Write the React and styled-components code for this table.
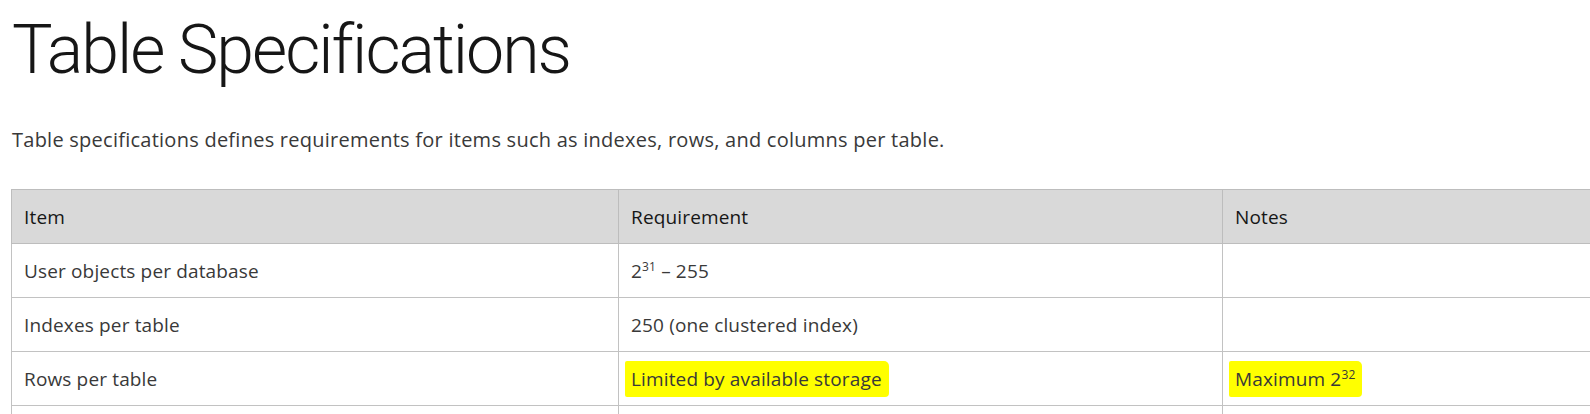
import styled, { createGlobalStyle } from 'styled-components'

const GlobalStyle = createGlobalStyle`
  html, body {
    margin: 0;
    padding: 0;
    background: #ffffff;
    overflow: hidden;
  }
`

const Page = styled.div`
  padding: 0 0 0 11px;
  font-family: "Open Sans", "Liberation Sans", sans-serif;
  width: 1900px;
`

const Title = styled.h1`
  margin: 0;
  padding: 10px 0 0 1px;
  font-family: Roboto, "Liberation Sans", sans-serif;
  font-weight: 300;
  font-size: 68px;
  line-height: 80px;
  letter-spacing: -2px;
  color: #161616;
`

const Intro = styled.p`
  margin: 38px 0 37px 1px;
  font-size: 20px;
  line-height: 24px;
  letter-spacing: 0.25px;
  color: #393939;
`

const Table = styled.table`
  border-collapse: collapse;
  table-layout: fixed;
  width: 1815px;
  font-size: 19px;
  letter-spacing: 0.15px;
`

const HeadCell = styled.th`
  width: ${p => p.$width}px;
  height: 54px;
  padding: 0 12px;
  box-sizing: border-box;
  background: #d9d9d9;
  border: 1px solid #bdbdbd;
  text-align: left;
  font-weight: 400;
  color: #161616;
`

const Cell = styled.td`
  height: 54px;
  padding: 0 12px;
  box-sizing: border-box;
  border: 1px solid #c2c2c2;
  color: #393939;
  vertical-align: middle;
`

const Mark = styled.span`
  background: #ffff00;
  padding: 5px 7px 5px 6px;
  margin-left: -6px;
  border-radius: 2px 5px 4px 2px;
`

const Sup = styled.sup`
  font-size: 12px;
  vertical-align: 7px;
  line-height: 0;
`

const rows = [
  { item: 'User objects per database', req: <>2<Sup>31</Sup> – 255</>, notes: '' },
  { item: 'Indexes per table', req: '250 (one clustered index)', notes: '' },
  {
    item: 'Rows per table',
    req: <Mark>Limited by available storage</Mark>,
    notes: <Mark>Maximum 2<Sup>32</Sup></Mark>,
  },
  { item: '', req: '', notes: '' },
]

export default function App() {
  return (
    <>
      <GlobalStyle />
      <Page>
        <Title>Table Specifications</Title>
        <Intro>
          Table specifications defines requirements for items such as indexes, rows, and columns per table.
        </Intro>
        <Table>
          <thead>
            <tr>
              <HeadCell $width={607}>Item</HeadCell>
              <HeadCell $width={604}>Requirement</HeadCell>
              <HeadCell $width={604}>Notes</HeadCell>
            </tr>
          </thead>
          <tbody>
            {rows.map((row, i) => (
              <tr key={i}>
                <Cell>{row.item}</Cell>
                <Cell>{row.req}</Cell>
                <Cell>{row.notes}</Cell>
              </tr>
            ))}
          </tbody>
        </Table>
      </Page>
    </>
  )
}
